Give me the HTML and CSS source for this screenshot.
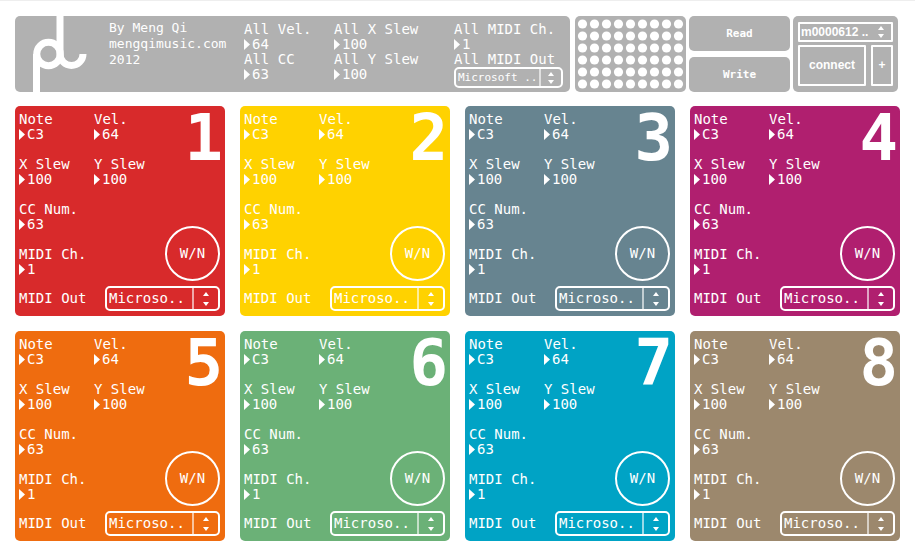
FILE: index.html
```html
<!DOCTYPE html>
<html lang="en">
<head>
<meta charset="utf-8">
<meta name="viewport" content="width=device-width, initial-scale=1">
<title>Meng Qi MIDI controller</title>
<link rel="stylesheet" href="styles.css">
</head>
<body>
<header class="toolbar">
  <section class="master">
    <svg class="logo" viewBox="0 0 56 76" aria-hidden="true">
      <g fill="none" stroke="#fff" stroke-width="7">
        <path d="M5.5 76V38"/>
        <circle cx="17.5" cy="38" r="11.75"/>
        <path d="M29 0V38a11.5 11.5 0 0 0 23 0"/>
      </g>
    </svg>
    <p class="credits">By Meng Qi<br>mengqimusic.com<br>2012</p>
    <div class="master-fields">
      <div class="field"><label for="all-vel">All Vel.</label><span class="value"><input id="all-vel" value="64"></span></div>
      <div class="field"><label for="all-x">All X Slew</label><span class="value"><input id="all-x" value="100"></span></div>
      <div class="field"><label for="all-ch">All MIDI Ch.</label><span class="value"><input id="all-ch" value="1"></span></div>
      <div class="field"><label for="all-cc">All CC</label><span class="value"><input id="all-cc" value="63"></span></div>
      <div class="field"><label for="all-y">All Y Slew</label><span class="value"><input id="all-y" value="100"></span></div>
      <div class="field"><label for="all-out">All MIDI Out</label>
        <span class="picker picker-small"><select id="all-out"><option>Microsoft ..</option></select><span class="stepper"><svg viewBox="0 0 8 14" aria-hidden="true"><path d="M4 1 7 5H1zM4 13 1 9h6z"/></svg></span></span>
      </div>
    </div>
  </section>
  <svg class="dots" viewBox="0 0 111 76" role="img" aria-label="Button grid">
    <defs><pattern id="dot" x="1" y="2" width="12" height="12" patternUnits="userSpaceOnUse"><circle cx="6.5" cy="6" r="4.6"/></pattern></defs>
    <rect x="1" y="2" width="108" height="72" fill="url(#dot)"/>
  </svg>
  <div class="file-actions">
    <button type="button">Read</button>
    <button type="button">Write</button>
  </div>
  <section class="device">
    <span class="picker picker-device"><select aria-label="Device"><option>m0000612 ..</option></select><span class="stepper"><svg viewBox="0 0 8 14" aria-hidden="true"><path d="M4 1 7 5H1zM4 13 1 9h6z"/></svg></span></span>
    <div class="device-actions">
      <button type="button" class="connect">connect</button>
      <button type="button">+</button>
    </div>
  </section>
</header>
<main class="pads" id="pads"></main>
<script src="script.js"></script>
</body>
</html>
```
FILE: styles.css
```css
* { box-sizing: border-box; }

body {
  margin: 0;
  border-top: 1px solid #eee;
  background: #fff;
  color: #fff;
  font: 14px/15px "DejaVu Sans Mono", monospace;
}

p { margin: 0; }

input, select, button {
  margin: 0;
  padding: 0;
  border: 0;
  border-radius: 0;
  background: none;
  color: inherit;
  font: inherit;
}

select { appearance: none; }
option { color: #333; }
button { cursor: pointer; }

/* Toolbar */
.toolbar {
  display: flex;
  gap: 3px;
  padding: 15px 17px 14px 15px;
}

.master, .dots, .file-actions button, .device {
  background: #b1b1b1;
  border-radius: 5px;
}

.master {
  display: flex;
  flex: 1;
  min-width: 0;
  margin-right: 2px;
  padding-left: 16px;
}

.logo { width: 56px; height: 76px; flex: none; }

.credits {
  width: 135px;
  padding: 4px 0 0 22px;
  font-size: 13px;
  line-height: 16px;
  white-space: nowrap;
}

.master-fields {
  display: grid;
  grid-template-columns: 90px 120px 109px;
  align-content: start;
  padding: 6px 0 0 22px;
}

.field { display: flex; flex-direction: column; white-space: nowrap; }

.value { display: flex; align-items: center; gap: 2px; }

.value::before {
  content: "";
  width: 6px;
  height: 11px;
  background: #fff;
  clip-path: polygon(0 0, 100% 50%, 0 100%);
}

.value input { width: 50px; height: 15px; }

.picker {
  display: flex;
  position: relative;
  height: 25px;
  border: 2px solid #fff;
  border-radius: 5px;
}

.picker select { width: 100%; padding-left: 2px; }

.stepper {
  position: absolute;
  top: 0;
  right: 0;
  bottom: 0;
  width: 26px;
  display: grid;
  place-items: center;
  border-left: 2px solid rgba(255, 255, 255, 0.6);
  pointer-events: none;
}

.stepper svg { width: 8px; height: 14px; fill: #fff; }

.picker-small { height: 21px; font-size: 11px; }
.picker-small .stepper { width: 22px; }

.dots { width: 111px; height: 76px; flex: none; fill: #fff; }

.file-actions {
  display: flex;
  flex-direction: column;
  gap: 6px;
  width: 101px;
}

.file-actions button { flex: 1; font-size: 11px; font-weight: bold; }

.device {
  display: flex;
  flex-direction: column;
  gap: 3px;
  width: 105px;
  padding: 6px 5px;
  font: bold 12px/15px "Liberation Sans", Arial, sans-serif;
}

.picker-device { height: 20px; border-radius: 1px; }
.picker-device select { padding-left: 1px; }
.picker-device .stepper { width: 20px; border: 0; }

.device-actions { display: flex; flex: 1; gap: 5px; }
.device-actions button { width: 22px; border: 2px solid #fff; border-radius: 1px; }
.device-actions .connect { flex: 1; }

/* Pads */
.pads {
  display: grid;
  grid-template-columns: repeat(4, 1fr);
  gap: 15px;
  padding: 0 15px 15px;
}

.pad {
  display: flex;
  flex-direction: column;
  gap: 5px;
  padding: 6px 5px 5px 4px;
  border-radius: 5px;
}

.red { background: #d82a2b; }
.yellow { background: #ffd200; }
.slate { background: #678490; }
.magenta { background: #b01f6f; }
.orange { background: #ef6c0f; }
.green { background: #6bb177; }
.cyan { background: #00a3c5; }
.brown { background: #9c886d; }

.pad-body { display: flex; justify-content: space-between; }

.pad-fields {
  display: grid;
  grid-template-columns: 75px 66px;
  row-gap: 15px;
  padding-bottom: 4px;
}

.pad-fields .wide { grid-column: 1 / -1; }

.pad-side {
  display: flex;
  flex-direction: column;
  align-items: flex-end;
  justify-content: space-between;
}

.number {
  margin-right: -3px;
  font-size: 64px;
  font-weight: bold;
  line-height: 52px;
}

.note-button {
  width: 55px;
  height: 55px;
  border: 2px solid #fff;
  border-radius: 50%;
}

.pad-out { display: flex; align-items: center; }
.pad-out label { width: 86px; }
.pad-out .picker { flex: 1; }
```
FILE: script.js
```js
const colors = ["red", "yellow", "slate", "magenta", "orange", "green", "cyan", "brown"];

const field = (id, label, value, wide) => `
  <div class="field${wide ? " wide" : ""}">
    <label for="${id}">${label}</label>
    <span class="value"><input id="${id}" value="${value}"></span>
  </div>`;

document.getElementById("pads").innerHTML = colors.map((color, i) => {
  const n = i + 1;
  return `
  <section class="pad ${color}">
    <div class="pad-body">
      <div class="pad-fields">
        ${field(`note-${n}`, "Note", "C3")}
        ${field(`vel-${n}`, "Vel.", "64")}
        ${field(`x-${n}`, "X Slew", "100")}
        ${field(`y-${n}`, "Y Slew", "100")}
        ${field(`cc-${n}`, "CC Num.", "63", true)}
        ${field(`ch-${n}`, "MIDI Ch.", "1", true)}
      </div>
      <div class="pad-side">
        <span class="number">${n}</span>
        <button type="button" class="note-button">W/N</button>
      </div>
    </div>
    <div class="pad-out">
      <label for="out-${n}">MIDI Out</label>
      <span class="picker"><select id="out-${n}"><option>Microso..</option></select><span class="stepper"><svg viewBox="0 0 8 14" aria-hidden="true"><path d="M4 0 7 4H1zM4 14 1 10h6z"/></svg></span></span>
    </div>
  </section>`;
}).join("");
```
